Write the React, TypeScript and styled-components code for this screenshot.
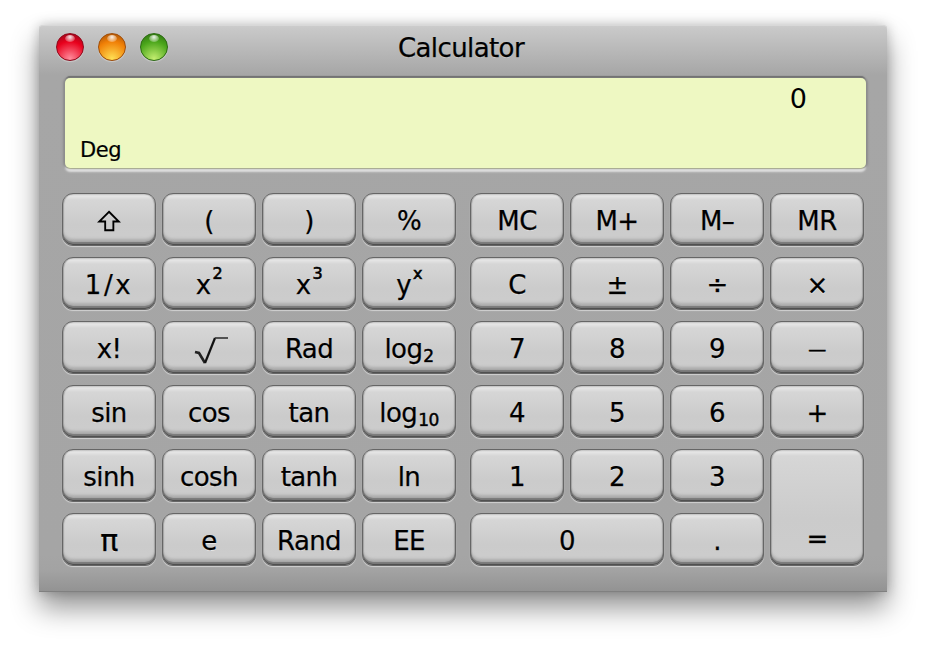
import React from "react";
import styled, { createGlobalStyle } from "styled-components";

const Global = createGlobalStyle`
  html, body { margin: 0; padding: 0; background: #fff; }
  body { font-family: "DejaVu Sans", "Liberation Sans", sans-serif; }
`;

const Page = styled.div`
  width: 926px;
  height: 646px;
  padding: 25px 0 0 39px;
  box-sizing: border-box;
  overflow: hidden;
`;

const Win = styled.div`
  width: 848px;
  height: 567px;
  box-sizing: border-box;
  border-radius: 4px 4px 0 0;
  background: linear-gradient(#cdcdcd 0, #c8c8c8 4px, #a6a6a6 50px, #a5a5a5 530px, #a3a3a3 545px, #929292 567px);
  box-shadow: 0 16px 28px rgba(0, 0, 0, 0.42), 0 0 12px rgba(0, 0, 0, 0.22), inset 0 -1px 0 #808080, inset 0 1px 0 #d8d8d8;
  display: flex;
  flex-direction: column;
`;

const TitleBar = styled.div`
  height: 46px;
  position: relative;
  display: flex;
  align-items: center;
  justify-content: center;
  flex: none;
`;

const Title = styled.div`
  font-size: 26px;
  letter-spacing: -0.6px;
  color: #000;
  margin-left: -4px;
  -webkit-text-stroke: 0.25px #000;
  text-shadow: 0 1px 0 rgba(255, 255, 255, 0.3);
`;

const Lights = styled.div`
  position: absolute;
  left: 17px;
  top: 8px;
  display: flex;
  gap: 14px;
`;

const Light = styled.div<{ $dark: string; $mid: string; $light: string }>`
  width: 28px;
  height: 28px;
  border-radius: 50%;
  position: relative;
  box-sizing: border-box;
  border: 1px solid ${p => p.$dark};
  background: radial-gradient(circle at 50% 95%, ${p => p.$light} 0, ${p => p.$mid} 62%, ${p => p.$dark} 100%);
  box-shadow: 0 1px 1px rgba(255, 255, 255, 0.35);
  &::after {
    content: "";
    position: absolute;
    left: 8px;
    top: 1px;
    width: 10px;
    height: 7px;
    border-radius: 50%;
    background: radial-gradient(ellipse at 50% 30%, rgba(255, 255, 255, 0.9), rgba(255, 255, 255, 0));
  }
`;

const DisplayWell = styled.div`
  margin: 7px 21px 0 26px;
  height: 90px;
  flex: none;
  border-radius: 5px;
  background: #eef8c2;
  box-shadow:
    -2px 0 2px #8c8c8c,
    2px 0 2px #8c8c8c,
    0 -2px 1px #6c6c6c,
    0 1px 0 #c4c99e,
    0 4px 2px 0 #dedede;
  position: relative;
`;

const Reading = styled.div`
  position: absolute;
  right: 59px;
  top: 4px;
  font-size: 27px;
  line-height: 34px;
  color: #000;
`;

const Mode = styled.div`
  position: absolute;
  left: 15px;
  top: 58px;
  font-size: 21px;
  letter-spacing: -0.4px;
  line-height: 28px;
  color: #000;
  -webkit-text-stroke: 0.2px #000;
`;

const Keypad = styled.div`
  margin: 25px 0 0 23px;
  display: flex;
  gap: 14px;
`;

const Keys = styled.div`
  display: grid;
  grid-template-columns: repeat(4, 94px);
  grid-auto-rows: 53px;
  column-gap: 6px;
  row-gap: 11px;
`;

const Key = styled.div<{ $wide?: boolean; $tall?: boolean; $loose?: boolean }>`
  grid-column: ${p => (p.$wide ? "span 2" : "auto")};
  grid-row: ${p => (p.$tall ? "span 2" : "auto")};
  box-sizing: border-box;
  border-radius: 11px;
  border: 1px solid #666;
  background: linear-gradient(#c8c8c8 0, #e6e6e6 2px, #d6d6d6 6px, #cbcbcb 60%, #cdcdcd 100%);
  box-shadow:
    0 1px 1px #d2d2d2,
    inset 0 -1px 0 #505050,
    inset 0 -3px 1px #787878,
    inset 0 -7px 3px -1px #acacac,
    inset 1px 0 1px #a8a8a8,
    inset -1px 0 1px #a8a8a8;
  display: flex;
  align-items: ${p => (p.$tall ? "flex-end" : "center")};
  justify-content: center;
  padding-top: ${p => (p.$tall ? "0" : "2px")};
  padding-bottom: ${p => (p.$tall ? "13px" : "0")};
  font-size: 26px;
  letter-spacing: ${p => (p.$loose ? "2.6px" : "-0.6px")};
  line-height: 1;
  color: #000;
  -webkit-text-stroke: 0.25px #000;
  text-shadow: 0 1px 0 rgba(255, 255, 255, 0.55);
`;

const Sup = styled.span`
  font-size: 16px;
  position: relative;
  top: -11px;
  margin-left: 2px;
  -webkit-text-stroke: 0.6px #000;
  line-height: 0;
`;

const Sub = styled.span`
  font-size: 17px;
  position: relative;
  top: 7px;
  margin-left: 1px;
  -webkit-text-stroke: 0.5px #000;
  line-height: 0;
`;

const MinusGlyph = styled.span`
  font-size: 18px;
  -webkit-text-stroke: 0.5px #000;
`;

const PiGlyph = styled.span`
  font-size: 30px;
`;

const ShiftIcon = () => (
  <svg width="24" height="24" viewBox="0 0 22 22" fill="none" stroke="#000" strokeWidth="1.7">
    <path d="M11 2.5 L20 11.5 H15 V19.5 H7.5 V11.5 H2 Z" strokeLinejoin="miter" />
  </svg>
);

const RootIcon = () => (
  <svg width="40" height="32" viewBox="0 0 40 32" fill="none">
    <path d="M6 19 L10 20 L16 30" stroke="#222" strokeWidth="2.6" />
    <path d="M16 30 L26 5" stroke="#111" strokeWidth="2.2" />
    <path d="M26 5 H39" stroke="#333" strokeWidth="1.6" />
  </svg>
);

const left: { label: React.ReactNode; loose?: boolean }[] = [
  { label: <ShiftIcon /> }, { label: "(" }, { label: ")" }, { label: "%" },
  { label: "1/x", loose: true }, { label: <>x<Sup>2</Sup></> }, { label: <>x<Sup>3</Sup></> }, { label: <>y<Sup>x</Sup></> },
  { label: "x!" }, { label: <RootIcon /> }, { label: "Rad" }, { label: <>log<Sub>2</Sub></> },
  { label: "sin" }, { label: "cos" }, { label: "tan" }, { label: <>log<Sub>10</Sub></> },
  { label: "sinh" }, { label: "cosh" }, { label: "tanh" }, { label: "ln" },
  { label: <PiGlyph>π</PiGlyph> }, { label: "e" }, { label: "Rand" }, { label: "EE" },
];

const right: React.ReactNode[] = [
  "MC", "M+", "M–", "MR",
  "C", "±", "÷", "×",
  "7", "8", "9", <MinusGlyph>—</MinusGlyph>,
  "4", "5", "6", "+",
  "1", "2", "3",
];

export default function App() {
  return (
    <Page>
      <Global />
      <Win>
        <TitleBar>
          <Lights>
            <Light $dark="#8e0a1c" $mid="#e8001c" $light="#ff8d9d" />
            <Light $dark="#a04d08" $mid="#f07f06" $light="#ffe054" />
            <Light $dark="#2c6c12" $mid="#4aa51a" $light="#c4ee70" />
          </Lights>
          <Title>Calculator</Title>
        </TitleBar>
        <DisplayWell>
          <Reading>0</Reading>
          <Mode>Deg</Mode>
        </DisplayWell>
        <Keypad>
          <Keys>
            {left.map((k, i) => <Key key={i} $loose={k.loose}>{k.label}</Key>)}
          </Keys>
          <Keys>
            {right.map((k, i) => <Key key={i}>{k}</Key>)}
            <Key $tall>=</Key>
            <Key $wide>0</Key>
            <Key>.</Key>
          </Keys>
        </Keypad>
      </Win>
    </Page>
  );
}
